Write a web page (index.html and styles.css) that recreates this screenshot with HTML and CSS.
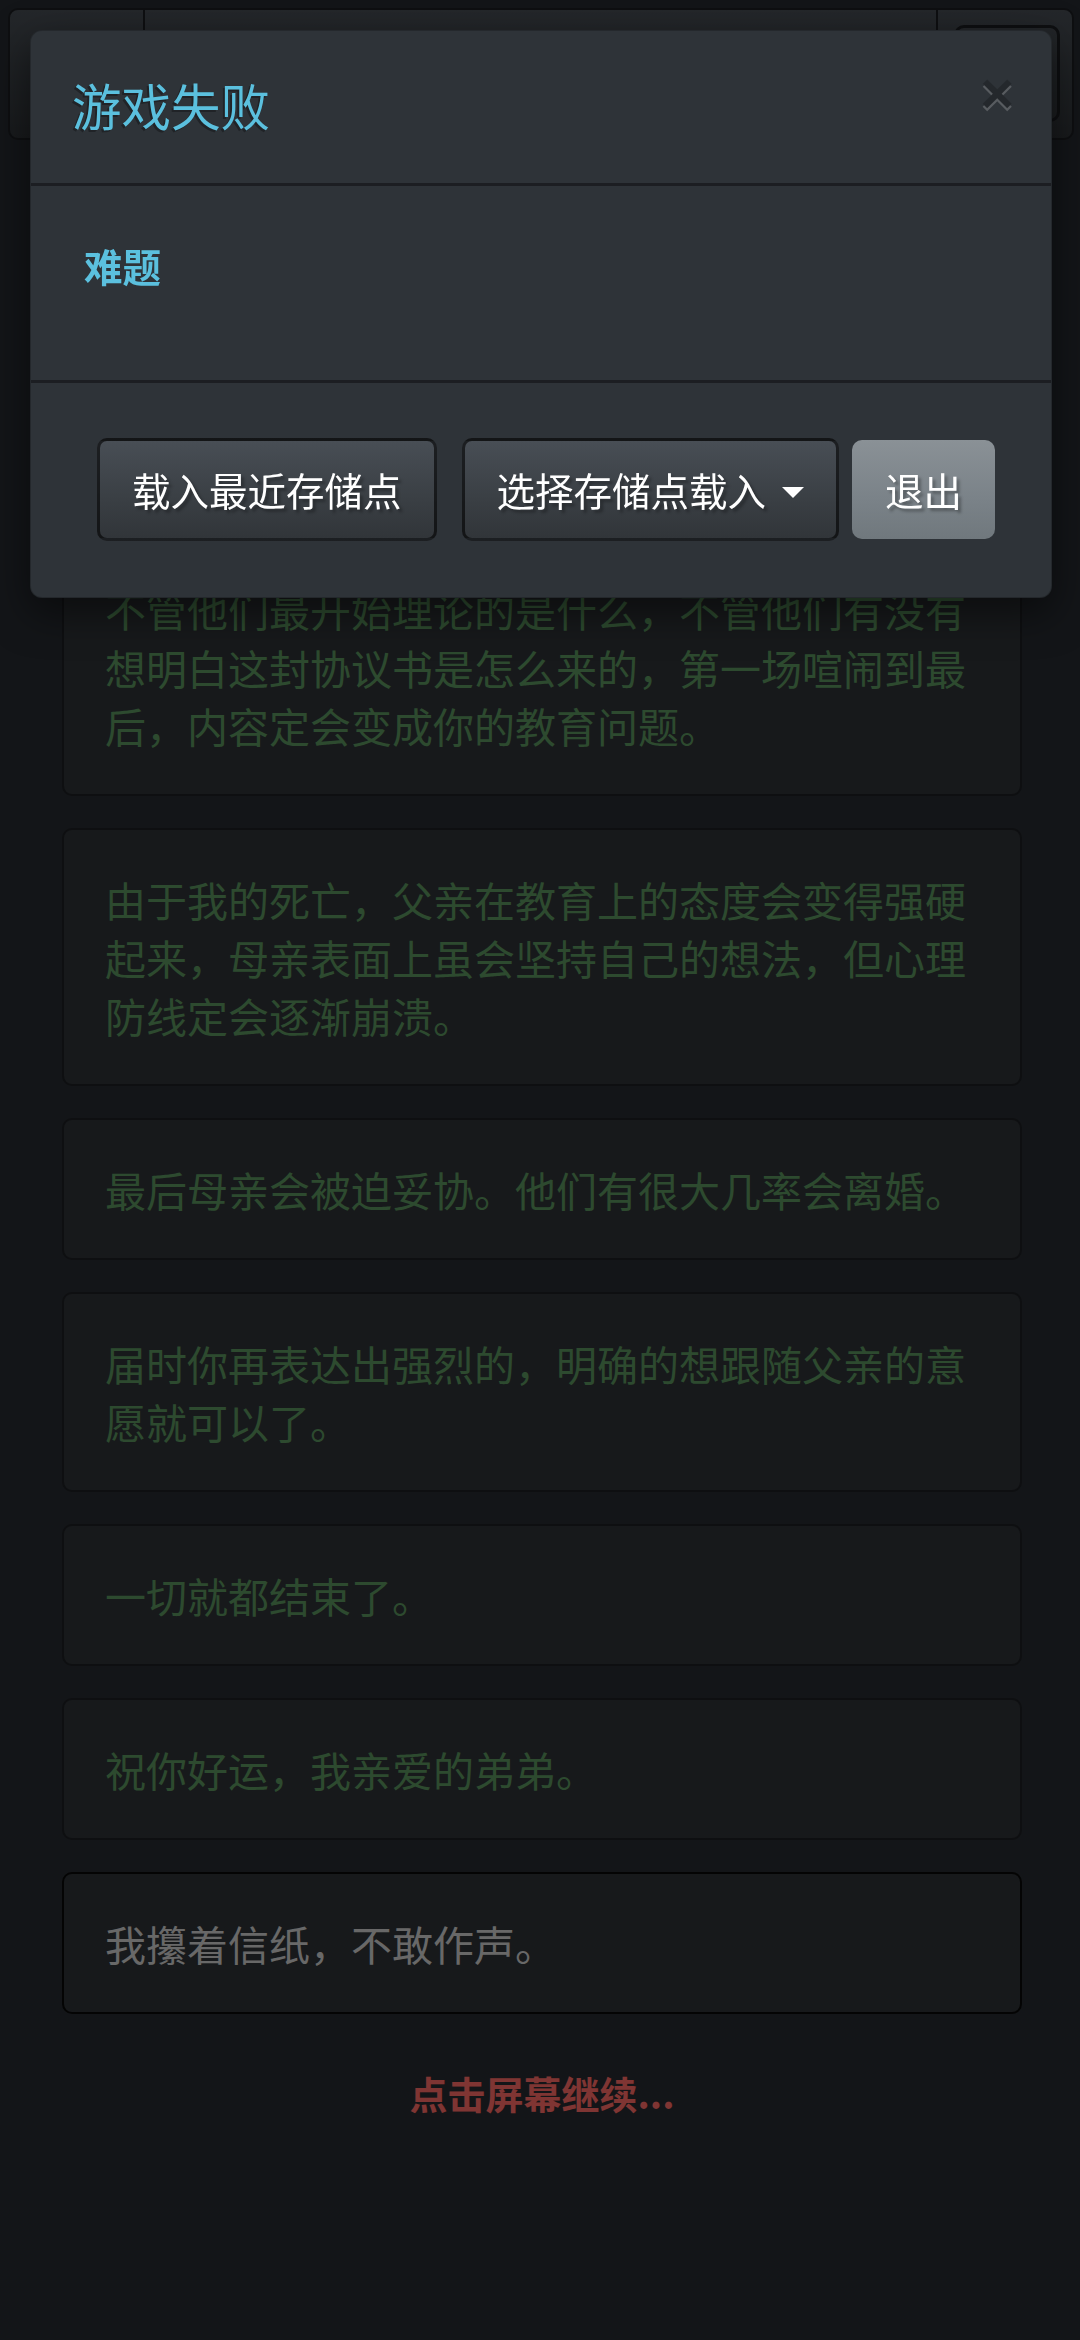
FILE: index.html
```html
<!DOCTYPE html>
<html lang="zh-CN">
<head>
    <meta charset="UTF-8">
    <meta name="viewport" content="width=device-width, initial-scale=1.0">
    <title>游戏失败</title>
    <link rel="stylesheet" href="styles.css">
</head>
<body>
    <!-- Top bar (behind the dialog) -->
    <nav class="topbar">
        <div class="topbar-cell topbar-left"></div>
        <div class="topbar-cell topbar-mid"></div>
        <div class="topbar-cell topbar-right"><span class="topbar-btn"></span></div>
    </nav>

    <!-- Story lines -->
    <main class="story">
        <div class="story-card">不管他们最开始理论的是什么，不管他们有没有想明白这封协议书是怎么来的，第一场喧闹到最后，内容定会变成你的教育问题。</div>
        <div class="story-card">由于我的死亡，父亲在教育上的态度会变得强硬起来，母亲表面上虽会坚持自己的想法，但心理防线定会逐渐崩溃。</div>
        <div class="story-card">最后母亲会被迫妥协。他们有很大几率会离婚。</div>
        <div class="story-card">届时你再表达出强烈的，明确的想跟随父亲的意愿就可以了。</div>
        <div class="story-card">一切就都结束了。</div>
        <div class="story-card">祝你好运，我亲爱的弟弟。</div>
        <div class="story-card current">我攥着信纸，不敢作声。</div>
        <p class="continue">点击屏幕继续...</p>
    </main>

    <!-- Game over dialog -->
    <div class="backdrop"></div>
    <div class="modal">
        <div class="modal-header">
            <h4 class="modal-title">游戏失败</h4>
            <button class="close">&times;</button>
        </div>
        <div class="modal-body">
            <strong class="difficulty">难题</strong>
        </div>
        <div class="modal-footer">
            <button class="btn btn-primary">载入最近存储点</button>
            <div class="btn-group">
                <button class="btn btn-primary">选择存储点载入<span class="caret"></span></button>
            </div>
            <button class="btn btn-default">退出</button>
        </div>
    </div>
</body>
</html>
```

FILE: styles.css
```css
* {
    margin: 0;
    padding: 0;
    box-sizing: border-box;
}

body {
    background: #272b30;
    font-family: "Noto Sans CJK SC", "Noto Sans", sans-serif;
    color: #c8c8c8;
    min-height: 2340px;
}

/* top bar */
.topbar {
    margin: 8px 6px 0 8px;
    height: 132px;
    display: flex;
    background: linear-gradient(#484e55, #3a3f44 60%, #313539);
    border: 2px solid #1c1e22;
    border-radius: 10px;
}

.topbar-left {
    width: 135px;
    border-right: 2px solid #1c1e22;
}

.topbar-mid {
    flex: 1;
    border-right: 2px solid #1c1e22;
}

.topbar-right {
    width: 134px;
    padding: 15px 12px 0 16px;
}

.topbar-btn {
    display: block;
    height: 97px;
    border: 3px solid #1c1e22;
    border-radius: 10px;
}

/* story */
.story {
    margin-top: 398px;
    padding: 0 58px 0 62px;
    display: flex;
    flex-direction: column;
    gap: 32px;
}

.story-card {
    background: #2e3236;
    border: 2px solid #1c1e22;
    border-radius: 10px;
    padding: 40px 41px;
    font-size: 41px;
    line-height: 58px;
    color: #5a945e;
}

.story-card.current {
    color: #d0d0d0;
    border-color: #080808;
}

.continue {
    margin-top: 20px;
    text-align: center;
    font-size: 38px;
    line-height: 53px;
    font-weight: bold;
    color: #ff6b66;
}

/* dialog */
.backdrop {
    position: fixed;
    top: 0;
    right: 0;
    bottom: 0;
    left: 0;
    background: rgba(0, 0, 0, 0.5);
}

.modal {
    position: absolute;
    top: 30px;
    left: 30px;
    width: 1022px;
    background: #2e3338;
    border: 1px solid rgba(0, 0, 0, 0.2);
    border-radius: 12px;
    box-shadow: 0 14px 40px rgba(0, 0, 0, 0.5);
}

.modal-header {
    display: flex;
    justify-content: space-between;
    align-items: flex-start;
    padding: 47px 37px 51px 41px;
    border-bottom: 3px solid #1c1e22;
}

.modal-title {
    font-size: 49.5px;
    line-height: 54px;
    font-weight: normal;
    color: #5bc0de;
    text-shadow: -2px 2px 0 rgba(0, 0, 0, 0.3);
}

.close {
    margin-top: -14px;
    background: none;
    border: 0;
    font: bold 58px/1 "Liberation Sans", sans-serif;
    color: #000;
    text-shadow: 0 3px 0 #fff;
    opacity: 0.2;
}

.modal-body {
    padding: 52px 53px 87px;
}

.difficulty {
    display: block;
    font-size: 38.5px;
    line-height: 55px;
    color: #5bc0de;
}

.modal-footer {
    display: flex;
    align-items: center;
    padding: 55px 0 56px 66px;
    border-top: 3px solid #1c1e22;
}

.btn {
    font-family: "Noto Sans CJK SC", "Noto Sans", sans-serif;
    font-size: 38.5px;
    line-height: 55px;
    color: #fff;
    padding: 21px 32px;
    border: 3px solid rgba(0, 0, 0, 0.6);
    border-radius: 10px;
    text-shadow: 3px 3px 3px rgba(0, 0, 0, 0.3);
    display: flex;
    align-items: center;
}

.btn-primary {
    background: linear-gradient(#484e55, #3a3f44 60%, #313539);
}

.btn-default {
    background: linear-gradient(#8a9196, #7a8288 60%, #70787d);
    border: 0;
    padding: 22px 33px;
}

.btn-group {
    margin-left: 25px;
    margin-right: 13px;
}

.caret {
    width: 0;
    height: 0;
    margin-left: 16px;
    margin-top: 6px;
    border-top: 11px solid #fff;
    border-left: 11px solid transparent;
    border-right: 11px solid transparent;
}
```
